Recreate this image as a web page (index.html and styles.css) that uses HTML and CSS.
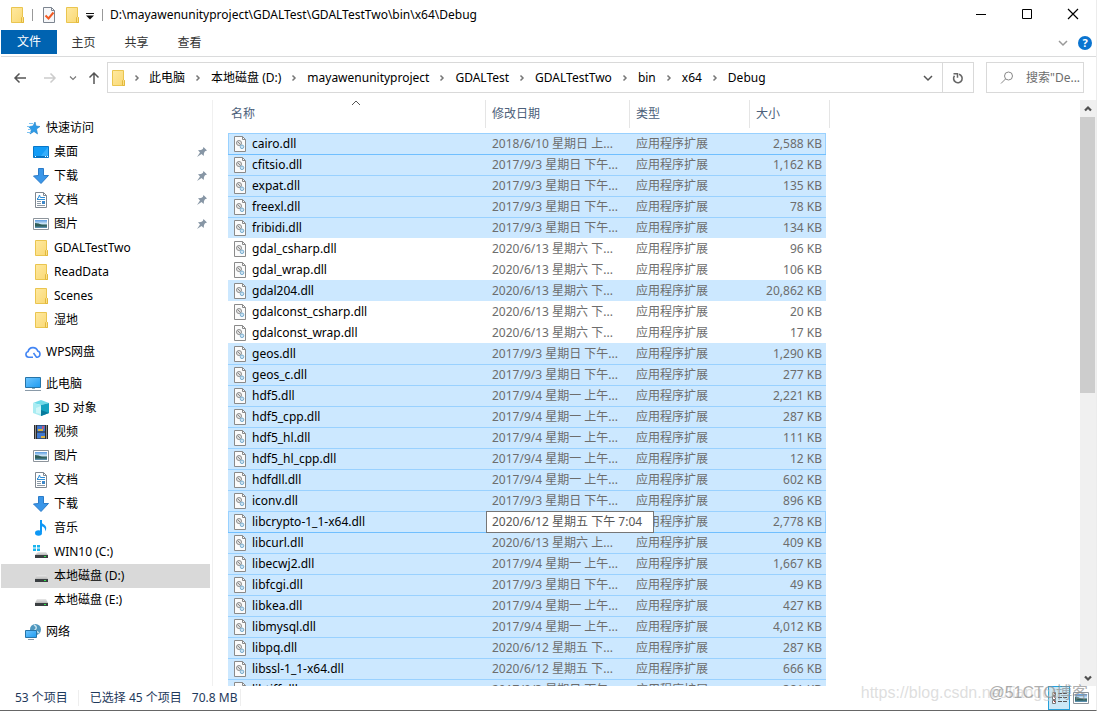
FILE: index.html
```html
<!DOCTYPE html>
<html lang="zh-CN">
<head>
<meta charset="utf-8">
<title>Debug</title>
<link rel="stylesheet" href="styles.css">
</head>
<body>
<svg class="sprite" aria-hidden="true">
  <defs>
    <linearGradient id="gFolder" x1="0" y1="0" x2="1" y2="1"><stop offset="0" stop-color="#ffe9a0"/><stop offset="1" stop-color="#f9d873"/></linearGradient>
    <linearGradient id="gBlue" x1="0" y1="0" x2="1" y2="1"><stop offset="0" stop-color="#6fc6ff"/><stop offset="1" stop-color="#1e9bf0"/></linearGradient>
    <linearGradient id="gSky" x1="0" y1="0" x2="0" y2="1"><stop offset="0" stop-color="#5a9be0"/><stop offset=".5" stop-color="#d8ecf8"/><stop offset=".6" stop-color="#3f6f70"/><stop offset="1" stop-color="#5f95b8"/></linearGradient>
    <linearGradient id="gDrive" x1="0" y1="0" x2="0" y2="1"><stop offset="0" stop-color="#e8e8e8"/><stop offset="1" stop-color="#b8b8b8"/></linearGradient>
  </defs>
  <symbol id="folder" viewBox="0 0 16 16"><path d="M2.500.5h11v9l1 1v5h-12z" fill="url(#gFolder)" stroke="#eac54f"/><path d="M12.500 15.500v-5l1-1 1 1v5z" fill="#fbe08a" stroke="#e3b93c"/></symbol>
  <symbol id="doccheck" viewBox="0 0 16 16"><path d="M2.500.5h8l3 3v12h-11z" fill="#f6f7f9" stroke="#7d8590"/><path d="M10.500.5v3h3" fill="none" stroke="#7d8590"/><path d="M4.500 8.500l3 3 5-6" fill="none" stroke="#f15a24" stroke-width="2"/></symbol>
  <symbol id="qmenu" viewBox="0 0 16 16"><path d="M4 6.500h8" stroke="#111"/><path d="M4 8.500h8l-4 4z" fill="#111"/></symbol>
  <symbol id="star" viewBox="0 0 16 16"><path d="M10 2l1 4 4 .5-3.500 2.500 1 5L9 11.500 5 14l1.500-4.500L3.500 6.700 8 6z" fill="#2d9be8" stroke="#1f7fc4" stroke-width=".6"/><path d="M4 3.500h4M2 6.500h3M3 9.500h3M2 12.500h4" stroke="#7cc3f2"/></symbol>
  <symbol id="desktop" viewBox="0 0 16 16"><path d="M.5 2.500h15v11H.5z" fill="#139cf6" stroke="#0877c8"/><path d="M7 13L15 3v10z" fill="#35aefc"/><path d="M1 12.500h14" stroke="#0873c0"/><path d="M2 12.500h1M12 12.500h1M14 12.500h1" stroke="#fff"/></symbol>
  <symbol id="download" viewBox="0 0 16 16"><path d="M5.500.5h5v7h5L8 15.500.5 8l5-.5z" fill="#3a96e8" stroke="#2b7bc8"/></symbol>
  <symbol id="document" viewBox="0 0 16 16"><path d="M2.500.5h8l3 3v12h-11z" fill="#fff" stroke="#7f8790"/><path d="M10.500.5v3h3" fill="none" stroke="#7f8790"/><path d="M4 6.500h1l1.500-3.500 1 3M4 7.500h8M8 5.500h4" fill="none" stroke="#2f8fd8"/><path d="M4 9.500h4M4 11.500h4M4 13.500h8" stroke="#8b98a4"/><path d="M9 9h3v3H9z" fill="#3d87c8"/></symbol>
  <symbol id="picture" viewBox="0 0 16 16"><path d="M.5 2.500h15v11H.5z" fill="#fff" stroke="#8d949b"/><path d="M2 4h12v8H2z" fill="url(#gSky)"/><path d="M2 7q4 0 7 2l5 .5v1H2z" fill="#2e5e5a"/></symbol>
  <symbol id="cloud" viewBox="0 0 16 16"><path d="M8 13.200H3.700a2.900 2.900 0 0 1-.6-5.700A5 5 0 0 1 12.700 7a3.200 3.200 0 0 1-.3 6.200H11.500L8.500 9" fill="none" stroke="#4285f4" stroke-width="1.600"/></symbol>
  <symbol id="pc" viewBox="0 0 16 16"><path d="M.5 1.500h15v10H.5z" fill="url(#gBlue)" stroke="#2674a8"/><path d="M7 12h3v1H7z" fill="#8ab"/><path d="M0 14.500h16" stroke="#8a9aa8"/></symbol>
  <symbol id="cube" viewBox="0 0 16 16"><path d="M0 3l8-3 8 3-8 2z" fill="#6fdbe8"/><path d="M0 3l8 2v11l-8-3z" fill="#a9ecf2"/><path d="M8 5l8-2v10l-8 3z" fill="#14a3c0"/><path d="M3 8l5-2v8l-5-1z" fill="#cff6f8"/><path d="M8 10l8 3-8 3z" fill="#077a9c"/></symbol>
  <symbol id="video" viewBox="0 0 16 16"><path d="M1 1h14v14H1z" fill="#2b2b2b"/><path d="M4 1.500h8v6H4zM4 8.500h8v6H4z" fill="#3f78d0"/><path d="M5 5h5v2H5zM8 12h4v2H8z" fill="#d8b040"/><path d="M9 2h2v3H9z" fill="#c0567a"/><path d="M2.500 1.500v14M13.500 1.500v14" stroke="#eee" stroke-dasharray="1 1"/></symbol>
  <symbol id="music" viewBox="0 0 16 16"><path d="M8 0v12" stroke="#0d97f5" stroke-width="2"/><path d="M8 0q0 3 3 4.500 4 3 1 7Q13 7 8 6z" fill="#0d97f5"/><ellipse cx="5.500" cy="13" rx="3.500" ry="2.800" fill="#0d97f5"/></symbol>
  <symbol id="drive" viewBox="0 0 16 16"><path d="M4 7h9l2 4H2z" fill="url(#gDrive)"/><path d="M2 11h13v3H2z" fill="#3b3f42"/><path d="M11 12h2v1h-2z" fill="#2ee84a"/></symbol>
  <symbol id="windrive" viewBox="0 0 16 16"><path d="M0 1h3v2.500H0zM4 1h3v2.500H4zM0 4.500h3V7H0zM4 4.500h3V7H4z" fill="#18b4ee"/><path d="M5 8h8l2 3H2z" fill="url(#gDrive)"/><path d="M2 11h13v3H2z" fill="#3b3f42"/><path d="M11 12h2v1h-2z" fill="#2ee84a"/></symbol>
  <symbol id="network" viewBox="0 0 16 16"><circle cx="10.500" cy="5.500" r="5.500" fill="#4f97be"/><path d="M9 1q4 2 1 5l4 3" fill="none" stroke="#c6e2ee" stroke-width="1.500"/><path d="M.5 6.500h11v7H.5z" fill="url(#gBlue)" stroke="#2674a8"/><path d="M3 15.500h6" stroke="#8a9aa8"/></symbol>
  <symbol id="pin" viewBox="0 0 12 12"><path d="M7.500 1L11 4.500l-2 .7-1 1.800-.3 3L5.500 8 1 11l3-4.500-2-2.200 3-.3 1.800-1z" fill="#8796a5"/></symbol>
  <symbol id="dll" viewBox="0 0 16 16"><path d="M2.500.5h8l3 3v12h-11z" fill="#fbfbfb" stroke="#8a8a8a"/><path d="M10.500.5v3h3" fill="none" stroke="#8a8a8a"/><circle cx="7" cy="7" r="2.500" fill="#e4e4e4" stroke="#8f8f8f"/><path d="M5.500 5.500l3 3" stroke="#888"/><circle cx="10" cy="10.800" r="1.800" fill="#cde4f4" stroke="#7aaed0"/></symbol>
  <symbol id="right" viewBox="0 0 16 16"><path d="M6.500 5.500L9 8l-2.500 2.500" fill="none" stroke="#777" stroke-width="1.500"/></symbol>
  <symbol id="down" viewBox="0 0 16 16"><path d="M4 6l4 4 4-4" fill="none" stroke="currentColor" stroke-width="1.500"/></symbol>
  <symbol id="up" viewBox="0 0 16 16"><path d="M4 10l4-4 4 4" fill="none" stroke="currentColor" stroke-width="3"/></symbol>
  <symbol id="left-arrow" viewBox="0 0 16 16"><path d="M14 8H3M7.500 3.500L3 8l4.500 4.500" fill="none" stroke="currentColor" stroke-width="1.500"/></symbol>
</svg>

<div class="window">
  <header class="titlebar">
    <svg class="icon"><use href="#folder"/></svg>
    <span class="bar"></span>
    <button class="plain" aria-label="属性"><svg class="icon"><use href="#doccheck"/></svg></button>
    <button class="plain gap" aria-label="新建文件夹"><svg class="icon"><use href="#folder"/></svg></button>
    <button class="plain" aria-label="自定义快速访问工具栏"><svg class="icon"><use href="#qmenu"/></svg></button>
    <span class="bar last"></span>
    <h1 class="title">D:\mayawenunityproject\GDALTest\GDALTestTwo\bin\x64\Debug</h1>
    <button class="wbtn" aria-label="最小化"><svg class="icon"><path d="M3 7.500h10" stroke="#000"/></svg></button>
    <button class="wbtn" aria-label="最大化"><svg class="icon"><path d="M3.500 2.500h9v9h-9z" fill="none" stroke="#000"/></svg></button>
    <button class="wbtn" aria-label="关闭"><svg class="icon"><path d="M3 2l10 10M13 2L3 12" stroke="#000" stroke-width="1.200"/></svg></button>
  </header>

  <nav class="ribbon" aria-label="功能区">
    <button class="tab file">文件</button>
    <button class="tab">主页</button>
    <button class="tab">共享</button>
    <button class="tab">查看</button>
    <span class="spacer"></span>
    <button class="plain pale" aria-label="展开功能区"><svg class="icon"><use href="#down"/></svg></button>
    <button class="help" aria-label="帮助">?</button>
  </nav>

  <div class="address">
    <div class="history">
      <button class="plain" aria-label="后退"><svg class="icon"><use href="#left-arrow"/></svg></button>
      <button class="plain forward" aria-label="前进"><svg class="icon flip"><use href="#left-arrow"/></svg></button>
      <button class="plain recent" aria-label="最近位置"><svg class="small"><use href="#down"/></svg></button>
      <button class="plain" aria-label="上移"><svg class="icon turn"><use href="#left-arrow"/></svg></button>
    </div>
    <div class="crumbs">
      <svg class="icon"><use href="#folder"/></svg>
      <svg class="chev"><use href="#right"/></svg><button class="crumb">此电脑</button>
      <svg class="chev"><use href="#right"/></svg><button class="crumb">本地磁盘 (D:)</button>
      <svg class="chev"><use href="#right"/></svg><button class="crumb">mayawenunityproject</button>
      <svg class="chev"><use href="#right"/></svg><button class="crumb">GDALTest</button>
      <svg class="chev"><use href="#right"/></svg><button class="crumb">GDALTestTwo</button>
      <svg class="chev"><use href="#right"/></svg><button class="crumb">bin</button>
      <svg class="chev"><use href="#right"/></svg><button class="crumb">x64</button>
      <svg class="chev"><use href="#right"/></svg><button class="crumb">Debug</button>
      <span class="spacer"></span>
      <button class="plain drop" aria-label="历史地址"><svg class="icon"><use href="#down"/></svg></button>
      <button class="refresh" aria-label="刷新"><svg class="icon"><path d="M9 4.300A4.300 4.300 0 1 1 4.500 5.800" fill="none" stroke="#666" stroke-width="1.600"/><path d="M3.500 3.700h4v4" fill="none" stroke="#666" stroke-width="1.500"/></svg></button>
    </div>
    <label class="search">
      <svg class="icon"><circle cx="9.500" cy="6" r="4" fill="none" stroke="#888"/><path d="M6.500 9L2 13.500" stroke="#888"/></svg>
      <input type="text" aria-label="搜索" placeholder="搜索&quot;De...">
    </label>
  </div>

  <main class="content">
    <nav class="tree" aria-label="导航窗格">
      <ul class="group">
        <li class="node root"><svg class="icon"><use href="#star"/></svg><a href="#q">快速访问</a></li>
        <li class="node"><svg class="icon"><use href="#desktop"/></svg><a href="#q">桌面</a><svg class="pin"><use href="#pin"/></svg></li>
        <li class="node"><svg class="icon"><use href="#download"/></svg><a href="#q">下载</a><svg class="pin"><use href="#pin"/></svg></li>
        <li class="node"><svg class="icon"><use href="#document"/></svg><a href="#q">文档</a><svg class="pin"><use href="#pin"/></svg></li>
        <li class="node"><svg class="icon"><use href="#picture"/></svg><a href="#q">图片</a><svg class="pin"><use href="#pin"/></svg></li>
        <li class="node"><svg class="icon"><use href="#folder"/></svg><a href="#q">GDALTestTwo</a></li>
        <li class="node"><svg class="icon"><use href="#folder"/></svg><a href="#q">ReadData</a></li>
        <li class="node"><svg class="icon"><use href="#folder"/></svg><a href="#q">Scenes</a></li>
        <li class="node"><svg class="icon"><use href="#folder"/></svg><a href="#q">湿地</a></li>
      </ul>
      <ul class="group">
        <li class="node root"><svg class="icon"><use href="#cloud"/></svg><a href="#w">WPS网盘</a></li>
      </ul>
      <ul class="group">
        <li class="node root"><svg class="icon"><use href="#pc"/></svg><a href="#p">此电脑</a></li>
        <li class="node"><svg class="icon"><use href="#cube"/></svg><a href="#p">3D 对象</a></li>
        <li class="node"><svg class="icon"><use href="#video"/></svg><a href="#p">视频</a></li>
        <li class="node"><svg class="icon"><use href="#picture"/></svg><a href="#p">图片</a></li>
        <li class="node"><svg class="icon"><use href="#document"/></svg><a href="#p">文档</a></li>
        <li class="node"><svg class="icon"><use href="#download"/></svg><a href="#p">下载</a></li>
        <li class="node"><svg class="icon"><use href="#music"/></svg><a href="#p">音乐</a></li>
        <li class="node"><svg class="icon"><use href="#windrive"/></svg><a href="#p">WIN10 (C:)</a></li>
        <li class="node current"><svg class="icon"><use href="#drive"/></svg><a href="#p">本地磁盘 (D:)</a></li>
        <li class="node"><svg class="icon"><use href="#drive"/></svg><a href="#p">本地磁盘 (E:)</a></li>
      </ul>
      <ul class="group">
        <li class="node root"><svg class="icon"><use href="#network"/></svg><a href="#n">网络</a></li>
      </ul>
    </nav>

    <section class="files">
      <table class="list">
        <colgroup><col class="c-name"><col class="c-date"><col class="c-type"><col class="c-size"><col class="c-end"></colgroup>
        <thead>
          <tr>
            <th><button class="sort first">名称<svg class="caret"><path d="M1 5l4-4 4 4" fill="none" stroke="#555"/></svg></button></th>
            <th><button class="sort">修改日期</button></th>
            <th><button class="sort">类型</button></th>
            <th colspan="2"><button class="sort">大小</button></th>
          </tr>
        </thead>
        <tbody>
          <tr class="sel focus"><td><svg class="icon"><use href="#dll"/></svg>cairo.dll</td><td>2018/6/10 星期日 上...</td><td>应用程序扩展</td><td>2,588 KB</td></tr>
          <tr class="sel"><td><svg class="icon"><use href="#dll"/></svg>cfitsio.dll</td><td>2017/9/3 星期日 下午...</td><td>应用程序扩展</td><td>1,162 KB</td></tr>
          <tr class="sel"><td><svg class="icon"><use href="#dll"/></svg>expat.dll</td><td>2017/9/3 星期日 下午...</td><td>应用程序扩展</td><td>135 KB</td></tr>
          <tr class="sel"><td><svg class="icon"><use href="#dll"/></svg>freexl.dll</td><td>2017/9/3 星期日 下午...</td><td>应用程序扩展</td><td>78 KB</td></tr>
          <tr class="sel"><td><svg class="icon"><use href="#dll"/></svg>fribidi.dll</td><td>2017/9/3 星期日 下午...</td><td>应用程序扩展</td><td>134 KB</td></tr>
          <tr><td><svg class="icon"><use href="#dll"/></svg>gdal_csharp.dll</td><td>2020/6/13 星期六 下...</td><td>应用程序扩展</td><td>96 KB</td></tr>
          <tr><td><svg class="icon"><use href="#dll"/></svg>gdal_wrap.dll</td><td>2020/6/13 星期六 下...</td><td>应用程序扩展</td><td>106 KB</td></tr>
          <tr class="sel"><td><svg class="icon"><use href="#dll"/></svg>gdal204.dll</td><td>2020/6/13 星期六 下...</td><td>应用程序扩展</td><td>20,862 KB</td></tr>
          <tr><td><svg class="icon"><use href="#dll"/></svg>gdalconst_csharp.dll</td><td>2020/6/13 星期六 下...</td><td>应用程序扩展</td><td>20 KB</td></tr>
          <tr><td><svg class="icon"><use href="#dll"/></svg>gdalconst_wrap.dll</td><td>2020/6/13 星期六 下...</td><td>应用程序扩展</td><td>17 KB</td></tr>
          <tr class="sel"><td><svg class="icon"><use href="#dll"/></svg>geos.dll</td><td>2017/9/3 星期日 下午...</td><td>应用程序扩展</td><td>1,290 KB</td></tr>
          <tr class="sel"><td><svg class="icon"><use href="#dll"/></svg>geos_c.dll</td><td>2017/9/3 星期日 下午...</td><td>应用程序扩展</td><td>277 KB</td></tr>
          <tr class="sel"><td><svg class="icon"><use href="#dll"/></svg>hdf5.dll</td><td>2017/9/4 星期一 上午...</td><td>应用程序扩展</td><td>2,221 KB</td></tr>
          <tr class="sel"><td><svg class="icon"><use href="#dll"/></svg>hdf5_cpp.dll</td><td>2017/9/4 星期一 上午...</td><td>应用程序扩展</td><td>287 KB</td></tr>
          <tr class="sel"><td><svg class="icon"><use href="#dll"/></svg>hdf5_hl.dll</td><td>2017/9/4 星期一 上午...</td><td>应用程序扩展</td><td>111 KB</td></tr>
          <tr class="sel"><td><svg class="icon"><use href="#dll"/></svg>hdf5_hl_cpp.dll</td><td>2017/9/4 星期一 上午...</td><td>应用程序扩展</td><td>12 KB</td></tr>
          <tr class="sel"><td><svg class="icon"><use href="#dll"/></svg>hdfdll.dll</td><td>2017/9/4 星期一 上午...</td><td>应用程序扩展</td><td>602 KB</td></tr>
          <tr class="sel"><td><svg class="icon"><use href="#dll"/></svg>iconv.dll</td><td>2017/9/3 星期日 下午...</td><td>应用程序扩展</td><td>896 KB</td></tr>
          <tr class="sel focus"><td><svg class="icon"><use href="#dll"/></svg>libcrypto-1_1-x64.dll</td><td class="hovered"><span class="tip" role="tooltip">2020/6/12 星期五 下午 7:04</span></td><td>应用程序扩展</td><td>2,778 KB</td></tr>
          <tr class="sel"><td><svg class="icon"><use href="#dll"/></svg>libcurl.dll</td><td>2020/6/13 星期六 上...</td><td>应用程序扩展</td><td>409 KB</td></tr>
          <tr class="sel"><td><svg class="icon"><use href="#dll"/></svg>libecwj2.dll</td><td>2017/9/4 星期一 上午...</td><td>应用程序扩展</td><td>1,667 KB</td></tr>
          <tr class="sel"><td><svg class="icon"><use href="#dll"/></svg>libfcgi.dll</td><td>2017/9/3 星期日 下午...</td><td>应用程序扩展</td><td>49 KB</td></tr>
          <tr class="sel"><td><svg class="icon"><use href="#dll"/></svg>libkea.dll</td><td>2017/9/4 星期一 上午...</td><td>应用程序扩展</td><td>427 KB</td></tr>
          <tr class="sel"><td><svg class="icon"><use href="#dll"/></svg>libmysql.dll</td><td>2017/9/4 星期一 上午...</td><td>应用程序扩展</td><td>4,012 KB</td></tr>
          <tr class="sel"><td><svg class="icon"><use href="#dll"/></svg>libpq.dll</td><td>2020/6/12 星期五 下...</td><td>应用程序扩展</td><td>287 KB</td></tr>
          <tr class="sel"><td><svg class="icon"><use href="#dll"/></svg>libssl-1_1-x64.dll</td><td>2020/6/12 星期五 下...</td><td>应用程序扩展</td><td>666 KB</td></tr>
          <tr class="sel"><td><svg class="icon"><use href="#dll"/></svg>libtiff.dll</td><td>2017/9/3 星期日 下午...</td><td>应用程序扩展</td><td>381 KB</td></tr>
        </tbody>
      </table>
    </section>

    <div class="scroll">
      <button class="plain" aria-label="向上滚动"><svg class="small"><use href="#up"/></svg></button>
      <div class="track"><div class="thumb"></div></div>
      <button class="plain" aria-label="向下滚动"><svg class="small flipv"><use href="#up"/></svg></button>
    </div>
  </main>

  <footer class="status">
    <span class="count">53 个项目</span>
    <span class="picked">已选择 45 个项目<span class="size">70.8 MB</span></span>
    <span class="spacer"></span>
    <button class="view on" aria-label="详细信息"><svg class="list-icon"><path d="M2.500 2.500h3v3h-3zM2.500 6.500h3v3h-3zM2.500 10.500h3v3h-3z" fill="#fff" stroke="#777"/><path d="M8 3.500h4M13 3.500h4M8 7.500h4M13 7.500h4M8 11.500h4M13 11.500h4" stroke="#555"/><path d="M4 3.500h1M4 7.500h1M4 11.500h1" stroke="#b33"/></svg></button>
    <button class="view" aria-label="大缩略图"><svg class="icon"><use href="#picture"/></svg></button>
    <span class="mark url">https://blog.csdn.net/lianggo</span>
    <span class="mark site">@51CTO博客</span>
  </footer>
</div>
</body>
</html>
```
FILE: styles.css
```css
* { box-sizing: border-box; }

body {
  margin: 0;
  background: #fff;
  color: #000;
  font: 12px/16px "Noto Sans", "Noto Sans CJK SC", sans-serif;
}

button, input {
  margin: 0;
  padding: 0;
  border: 0;
  background: none;
  color: inherit;
  font: inherit;
}

a { color: inherit; text-decoration: none; }
ul { margin: 0; padding: 0; list-style: none; }

.sprite { position: absolute; width: 0; height: 0; }
.icon { display: block; width: 16px; height: 16px; flex: none; }
.small { display: block; width: 12px; height: 12px; flex: none; }
.spacer { flex: 1; }
.plain { display: flex; align-items: center; justify-content: center; flex: none; }

.window {
  display: flex;
  flex-direction: column;
  height: 100vh;
  margin-right: 1px;
  padding-left: 1px;
  border-right: 1px solid #ececec;
  border-bottom: 1px solid #666;
  overflow: hidden;
}

/* title bar */
.titlebar { display: flex; align-items: center; flex: none; height: 30px; padding-left: 8px; }
.bar { width: 1px; height: 12px; margin: 0 8px 0 7px; background: #999; }
.bar.last { margin-left: 4px; margin-right: 7px; }
.titlebar .gap { margin: 0 2px 0 7px; }
.title { flex: 1; margin: 0; font-size: 12px; font-weight: 400; white-space: nowrap; }
.wbtn { display: flex; align-items: center; justify-content: center; width: 46px; height: 28px; }

/* ribbon */
.ribbon { display: flex; align-items: center; flex: none; height: 27px; padding-right: 4px; border-bottom: 1px solid #dadbdc; }
.tab { width: 53px; height: 24px; color: #333; }
.tab.file { width: 56px; align-self: flex-start; background: #0063b1; color: #fff; }
.pale { color: #999; }
.help {
  width: 14px;
  height: 14px;
  margin-left: 7px;
  border-radius: 50%;
  background: #0a74d0;
  color: #fff;
  font-size: 11px;
  line-height: 14px;
  font-weight: 700;
}

/* address row */
.address { display: flex; flex: none; gap: 12px; height: 43px; padding: 5px 12px 7px 0; }
.history { display: flex; align-items: center; width: 94px; padding-left: 11px; color: #555; }
.forward { margin-left: 14px; color: #ccc; }
.recent { margin: 0 7px 0 9px; color: #777; }
.history .plain:last-child { margin-right: -8px; }
.flip { transform: scaleX(-1); }
.flipv { transform: scaleY(-1); }
.turn { transform: rotate(90deg); }
.crumbs { display: flex; align-items: center; flex: 1; border: 1px solid #d9d9d9; padding-left: 2px; }
.chev { width: 16px; height: 16px; margin: 0 5px; flex: none; }
.icon + .chev { margin: 0 4px 0 3px; }
.crumb { white-space: nowrap; }
.drop { width: 28px; color: #555; }
.refresh { display: flex; align-items: center; justify-content: center; width: 31px; height: 100%; border-left: 1px solid #d9d9d9; }
.search { display: flex; align-items: center; width: 98px; border: 1px solid #d9d9d9; padding-left: 12px; }
.search input { flex: 1; min-width: 0; margin-left: 11px; outline: 0; }
.search input::placeholder { color: #6d6d6d; opacity: 1; }

/* content */
.content { display: flex; flex: 1; min-height: 0; }
.tree { width: 212px; flex: none; padding-top: 16px; border-right: 1px solid #f0f0f0; overflow: hidden; }
.group { margin-bottom: 8px; }
.node { display: flex; align-items: center; gap: 5px; height: 24px; margin-right: 2px; padding: 0 2px 0 32px; }
.node.root { padding-left: 24px; }
.node.current { background: #d9d9d9; }
.pin { width: 12px; height: 12px; margin-left: auto; }

.files { flex: 1; min-width: 0; padding-left: 15px; overflow: hidden; }
.list { width: 602px; border-spacing: 0; table-layout: fixed; }
.c-name { width: 258px; }
.c-date { width: 144px; }
.c-type { width: 120px; }
.c-size { width: 76px; }
.c-end { width: 4px; }
.list th { padding: 0 0 5px; font-weight: 400; }
.sort {
  display: block;
  position: relative;
  width: 100%;
  height: 28px;
  padding-left: 6px;
  border-right: 1px solid #e5e5e5;
  color: #4c607a;
  text-align: left;
}
.sort.first { padding-left: 3px; }
.caret { position: absolute; top: 0; left: 50%; width: 10px; height: 6px; margin-left: -6px; }
.list td { height: 21px; padding: 0 0 0 6px; color: #6d6d6d; line-height: 20px; white-space: nowrap; }
.list td:first-child { display: flex; align-items: center; gap: 4px; padding-left: 4px; color: #000; }
.list td:nth-child(4) { padding: 0 4px 0 0; text-align: right; }
.sel td { background: #cce8ff; }
.sel + .sel td { box-shadow: inset 0 1px #99d1ff; }
.list .focus td { box-shadow: inset 0 1px #99d1ff; }
.list .focus td:first-child { box-shadow: inset 1px 1px #99d1ff; }
.list .focus td:nth-child(4) { box-shadow: inset -1px 1px #99d1ff; }
.list .focus + .sel td { box-shadow: inset 0 1px #70bfff; }
.hovered { position: relative; }
.tip {
  position: absolute;
  z-index: 1;
  top: 0;
  left: 0;
  min-width: 168px;
  height: 22px;
  padding: 0 5px;
  border: 1px solid #767676;
  background: #fff;
  color: #575757;
}

.scroll { display: flex; flex-direction: column; width: 16px; flex: none; background: #f0f0f0; color: #505050; }
.scroll .plain { height: 17px; }
.track { flex: 1; }
.thumb { height: 50%; margin-right: 1px; background: #cdcdcd; }

/* status bar */
.status { position: relative; display: flex; align-items: center; flex: none; height: 24px; padding: 0 4px 0 14px; color: #1e395b; }
.count { padding-right: 10px; border-right: 1px solid #eee; }
.picked { padding: 0 0 0 11px; }
.size { padding: 0 3px 0 10px; border-right: 1px solid #eee; }
.view { display: flex; align-items: center; justify-content: center; width: 22px; height: 24px; }
.view.on { border: 1px solid #26a0da; background: #cbe8f6; }
.list-icon { width: 18px; height: 16px; }
.mark { position: absolute; font-family: "Liberation Sans", "Noto Sans CJK SC", sans-serif; font-size: 16px; line-height: 20px; white-space: nowrap; }
.mark.url { right: 36px; top: -3px; color: rgba(200, 200, 200, .6); }
.mark.site { right: 8px; top: -3px; color: rgba(140, 140, 140, .7); }
```
